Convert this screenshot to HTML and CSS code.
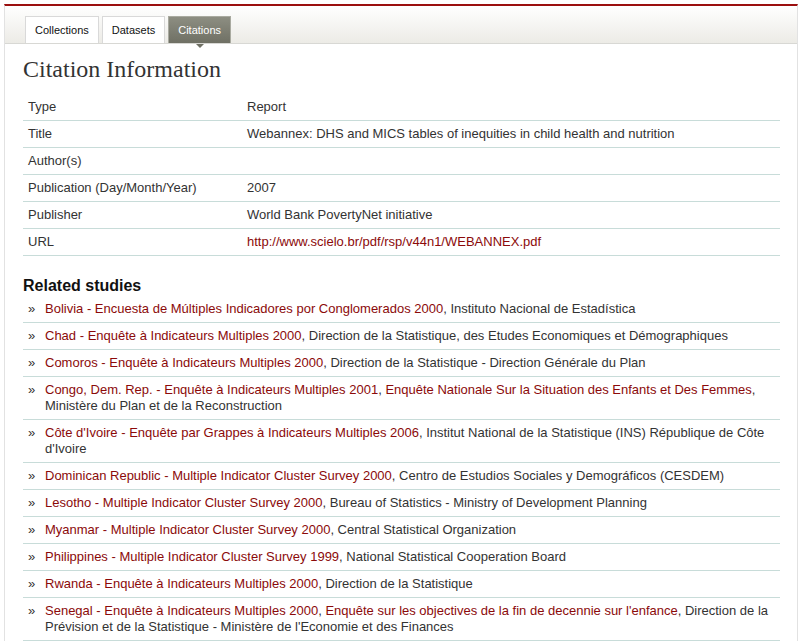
FILE: index.html
```html
<!DOCTYPE html>
<html>
<head>
<meta charset="utf-8">
<link rel="stylesheet" href="styles.css">
</head>
<body>
<div class="page">
  <div class="tabbar">
    <a class="tab">Collections</a>
    <a class="tab">Datasets</a>
    <a class="tab active">Citations</a>
  </div>
  <div class="content">
    <h1 class="title">Citation Information</h1>
    <table class="info">
      <tr><td class="lbl">Type</td><td>Report</td></tr>
      <tr><td class="lbl">Title</td><td>Webannex: DHS and MICS tables of inequities in child health and nutrition</td></tr>
      <tr><td class="lbl">Author(s)</td><td></td></tr>
      <tr><td class="lbl">Publication (Day/Month/Year)</td><td>2007</td></tr>
      <tr><td class="lbl">Publisher</td><td>World Bank PovertyNet initiative</td></tr>
      <tr><td class="lbl">URL</td><td><a class="link">http://www.scielo.br/pdf/rsp/v44n1/WEBANNEX.pdf</a></td></tr>
    </table>
    <h2 class="sub">Related studies</h2>
    <ul class="studies">
      <li><span class="bul">»</span><span class="txt"><a class="link">Bolivia - Encuesta de Múltiples Indicadores por Conglomerados 2000</a>, Instituto Nacional de Estadística</span></li>
      <li><span class="bul">»</span><span class="txt"><a class="link">Chad - Enquête à Indicateurs Multiples 2000</a>, Direction de la Statistique, des Etudes Economiques et Démographiques</span></li>
      <li><span class="bul">»</span><span class="txt"><a class="link">Comoros - Enquête à Indicateurs Multiples 2000</a>, Direction de la Statistique - Direction Générale du Plan</span></li>
      <li><span class="bul">»</span><span class="txt"><a class="link">Congo, Dem. Rep. - Enquête à Indicateurs Multiples 2001</a>, <a class="link">Enquête Nationale Sur la Situation des Enfants et Des Femmes</a>, Ministère du Plan et de la Reconstruction</span></li>
      <li><span class="bul">»</span><span class="txt"><a class="link">Côte d'Ivoire - Enquête par Grappes à Indicateurs Multiples 2006</a>, Institut National de la Statistique (INS) République de Côte d'Ivoire</span></li>
      <li><span class="bul">»</span><span class="txt"><a class="link">Dominican Republic - Multiple Indicator Cluster Survey 2000</a>, Centro de Estudios Sociales y Demográficos (CESDEM)</span></li>
      <li><span class="bul">»</span><span class="txt"><a class="link">Lesotho - Multiple Indicator Cluster Survey 2000</a>, Bureau of Statistics - Ministry of Development Planning</span></li>
      <li><span class="bul">»</span><span class="txt"><a class="link">Myanmar - Multiple Indicator Cluster Survey 2000</a>, Central Statistical Organization</span></li>
      <li><span class="bul">»</span><span class="txt"><a class="link">Philippines - Multiple Indicator Cluster Survey 1999</a>, National Statistical Cooperation Board</span></li>
      <li><span class="bul">»</span><span class="txt"><a class="link">Rwanda - Enquête à Indicateurs Multiples 2000</a>, Direction de la Statistique</span></li>
      <li><span class="bul">»</span><span class="txt"><a class="link">Senegal - Enquête à Indicateurs Multiples 2000</a>, <a class="link">Enquête sur les objectives de la fin de decennie sur l'enfance</a>, Direction de la Prévision et de la Statistique - Ministère de l'Economie et des Finances</span></li>
    </ul>
  </div>
</div>
</body>
</html>
```

FILE: styles.css
```css
html, body {
  margin: 0;
  padding: 0;
  background: #ffffff;
}
body {
  font-family: "Liberation Sans", Arial, sans-serif;
  font-size: 13px;
  color: #333333;
}
.page {
  margin: 4px 0 0 4px;
  width: 792px;
  border-top: 2px solid #9b0f0f;
  border-left: 1px solid #e2e2e2;
  border-right: 1px solid #e2e2e2;
  min-height: 700px;
}
.tabbar {
  height: 37px;
  padding: 0 0 0 20px;
  display: flex;
  align-items: flex-end;
  gap: 3px;
  background: linear-gradient(#ffffff, #ecebe6);
  border-bottom: 1px solid #d8d8d4;
  position: relative;
}
.tab {
  display: block;
  height: 26px;
  line-height: 26px;
  padding: 0 9px;
  background: #ffffff;
  border: 1px solid #d9d9d9;
  border-bottom: none;
  color: #111111;
  font-size: 11px;
  box-sizing: content-box;
}
.tab.active {
  background: linear-gradient(#8d8e82, #6f7064);
  border-color: #a9aaa0;
  color: #ffffff;
  position: relative;
}
.tab.active::after {
  content: "";
  position: absolute;
  left: 50%;
  bottom: -5px;
  margin-left: -4px;
  border-left: 4px solid transparent;
  border-right: 4px solid transparent;
  border-top: 4px solid #6f7064;
}
.content {
  padding: 0 17px 0 18px;
}
.title {
  font-family: "Liberation Serif", Georgia, serif;
  font-weight: normal;
  font-size: 24px;
  color: #333333;
  margin: 11px 0 11px 0;
  line-height: 28px;
}
.info {
  width: 100%;
  border-collapse: collapse;
}
.info td {
  padding: 5px 5px;
  line-height: 16px;
  border-bottom: 1px solid #c8dcd9;
  vertical-align: top;
}
.info td.lbl {
  width: 209px;
}
.link {
  color: #8b0a0a;
  text-decoration: none;
}
.sub {
  font-size: 16px;
  font-weight: bold;
  color: #111111;
  margin: 21px 0 1px 0;
  line-height: 18px;
}
.studies {
  list-style: none;
  margin: 0;
  padding: 0;
}
.studies li {
  display: flex;
  padding: 5px 0 5px 5px;
  line-height: 16px;
  border-bottom: 1px solid #c8dcd9;
}
.bul {
  width: 17px;
  flex: none;
}
.txt {
  flex: 1;
}
```
